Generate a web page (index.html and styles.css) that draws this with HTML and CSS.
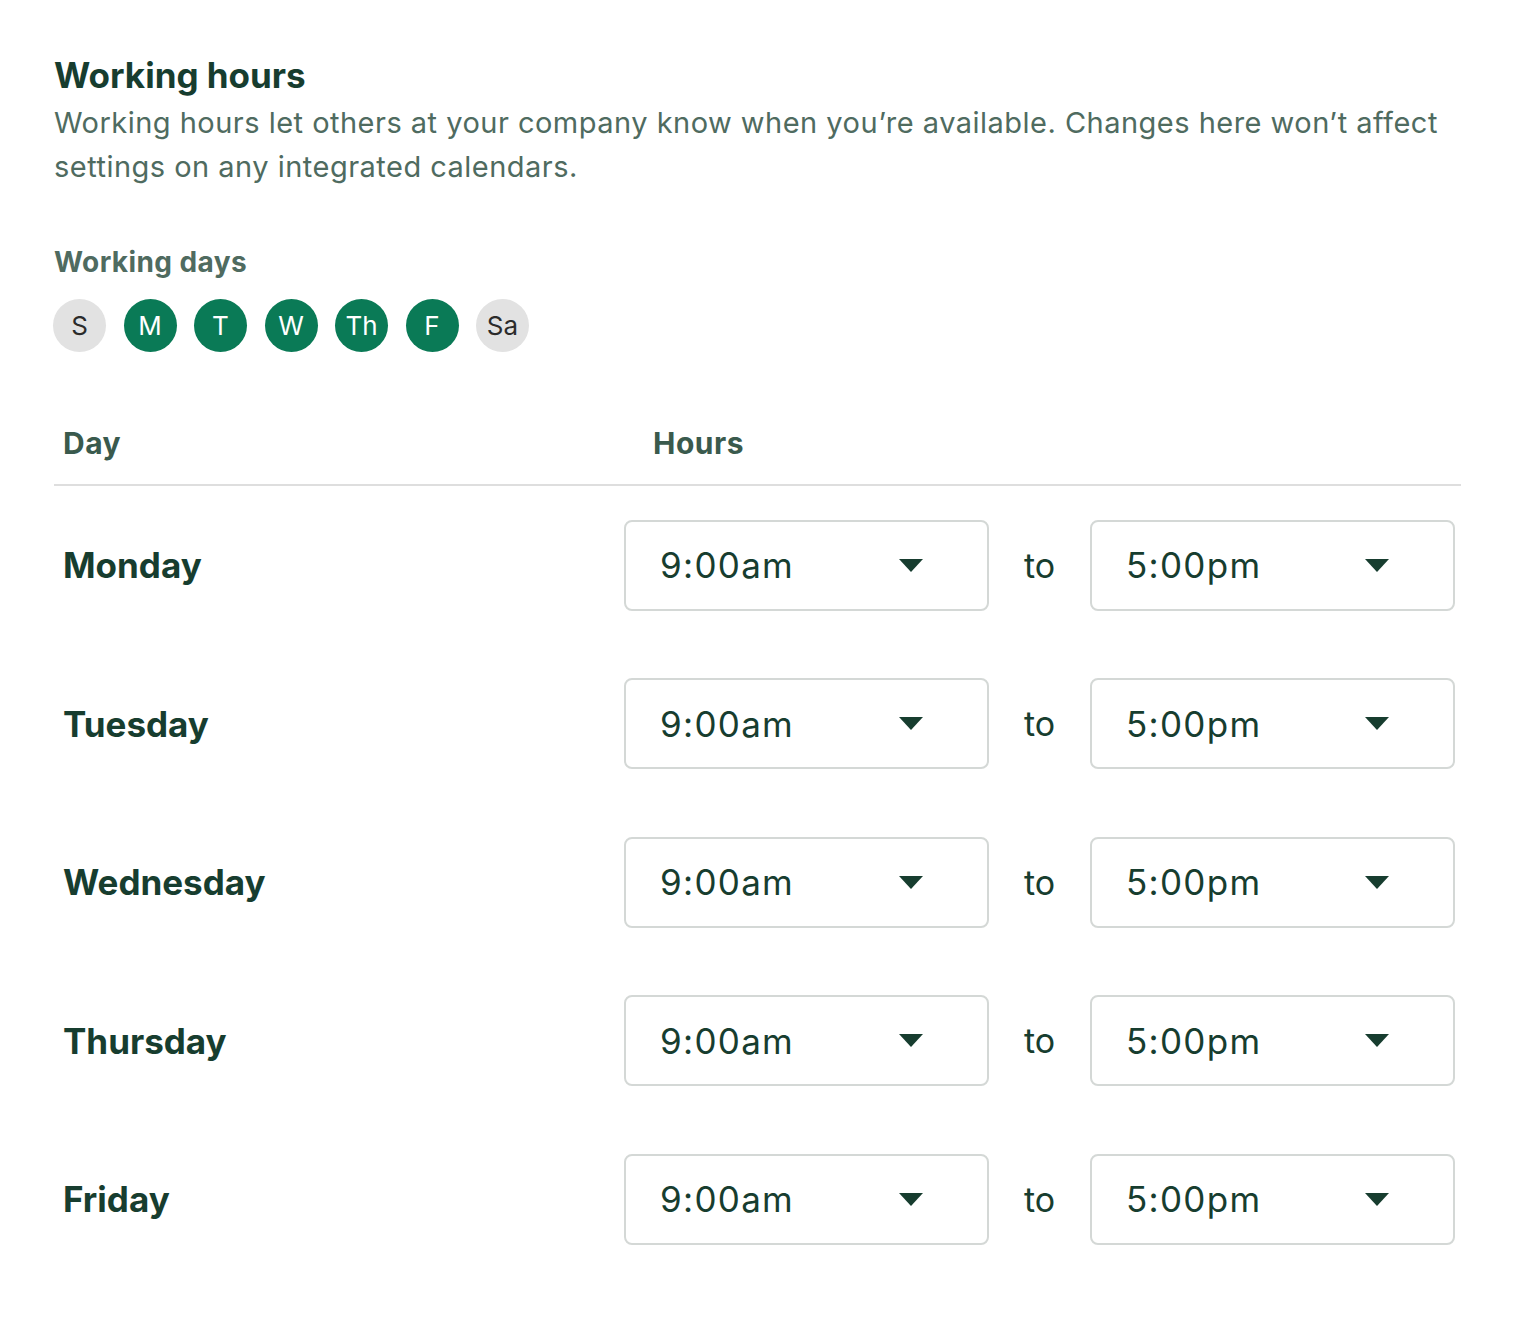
FILE: index.html
```html
<!DOCTYPE html>
<html lang="en">
<head>
  <meta charset="UTF-8" />
  <title>Working hours</title>
  <link rel="stylesheet" href="styles.css">
</head>
<body>
  <div class="settings">
    <h2 class="title">Working hours</h2>
    <p class="desc">Working hours let others at your company know when you’re available. Changes here won’t affect settings on any integrated calendars.</p>

    <div class="days-label">Working days</div>
    <div class="days">
      <span class="day-pill">S</span>
      <span class="day-pill on">M</span>
      <span class="day-pill on">T</span>
      <span class="day-pill on">W</span>
      <span class="day-pill on">Th</span>
      <span class="day-pill on">F</span>
      <span class="day-pill">Sa</span>
    </div>

    <div class="hours-table">
      <div class="head">
        <div class="head-day">Day</div>
        <div class="head-hours">Hours</div>
      </div>

      <div class="row">
        <div class="day-name">Monday</div>
        <div class="select"><span>9:00am</span><span class="caret"></span></div>
        <div class="to">to</div>
        <div class="select"><span>5:00pm</span><span class="caret"></span></div>
      </div>
      <div class="row">
        <div class="day-name">Tuesday</div>
        <div class="select"><span>9:00am</span><span class="caret"></span></div>
        <div class="to">to</div>
        <div class="select"><span>5:00pm</span><span class="caret"></span></div>
      </div>
      <div class="row">
        <div class="day-name">Wednesday</div>
        <div class="select"><span>9:00am</span><span class="caret"></span></div>
        <div class="to">to</div>
        <div class="select"><span>5:00pm</span><span class="caret"></span></div>
      </div>
      <div class="row">
        <div class="day-name">Thursday</div>
        <div class="select"><span>9:00am</span><span class="caret"></span></div>
        <div class="to">to</div>
        <div class="select"><span>5:00pm</span><span class="caret"></span></div>
      </div>
      <div class="row">
        <div class="day-name">Friday</div>
        <div class="select"><span>9:00am</span><span class="caret"></span></div>
        <div class="to">to</div>
        <div class="select"><span>5:00pm</span><span class="caret"></span></div>
      </div>
    </div>
  </div>
</body>
</html>
```

FILE: styles.css
```css
* {
  margin: 0;
  padding: 0;
  box-sizing: border-box;
}
html, body {
  background: #fff;
  font-family: "Inter", "Liberation Sans", sans-serif;
  color: #173d2f;
}
.settings {
  padding: 53px 57px 60px 54px;
}
.title {
  font-size: 35px;
  font-weight: 700;
  line-height: 44px;
  color: #173d2f;
}
.desc {
  font-size: 29px;
  letter-spacing: 0.48px;
  line-height: 44px;
  margin-top: 4px;
  color: #4f6b60;
}
.days-label {
  margin-top: 53px;
  font-size: 28px;
  letter-spacing: 0.4px;
  font-weight: 700;
  line-height: 40px;
  color: #4f6b60;
}
.days {
  display: flex;
  gap: 17.5px;
  margin-top: 17px;
  margin-left: -1px;
}
.day-pill {
  width: 53px;
  height: 53px;
  border-radius: 50%;
  background: #e2e2e2;
  color: #2b2b2b;
  display: flex;
  align-items: center;
  justify-content: center;
  font-size: 26px;
}
.day-pill.on {
  background: #0a7a56;
  color: #fff;
}

.hours-table {
  margin-top: 71px;
}
.head {
  display: flex;
  border-bottom: 2px solid #dedede;
  padding: 0 0 21px 9px;
  font-size: 30px;
  letter-spacing: 0.5px;
  font-weight: 700;
  line-height: 40px;
  color: #3a5a4d;
}
.head-day {
  width: 590px;
}
.row {
  display: flex;
  align-items: center;
  padding-left: 9px;
  height: 158.5px;
}
.day-name {
  width: 561px;
  font-size: 35px;
  font-weight: 700;
  color: #173d2f;
}
.select {
  width: 365px;
  height: 91px;
  border: 2px solid #d4d8d6;
  border-radius: 8px;
  display: flex;
  align-items: center;
  justify-content: space-between;
  padding: 0 64px 0 34px;
  font-size: 35px;
  letter-spacing: 1.3px;
  color: #173d2f;
}
.caret {
  width: 0;
  height: 0;
  border-left: 12px solid transparent;
  border-right: 12px solid transparent;
  border-top: 13px solid #173d2f;
}
.to {
  width: 101px;
  text-align: center;
  font-size: 34px;
  color: #173d2f;
}
```
